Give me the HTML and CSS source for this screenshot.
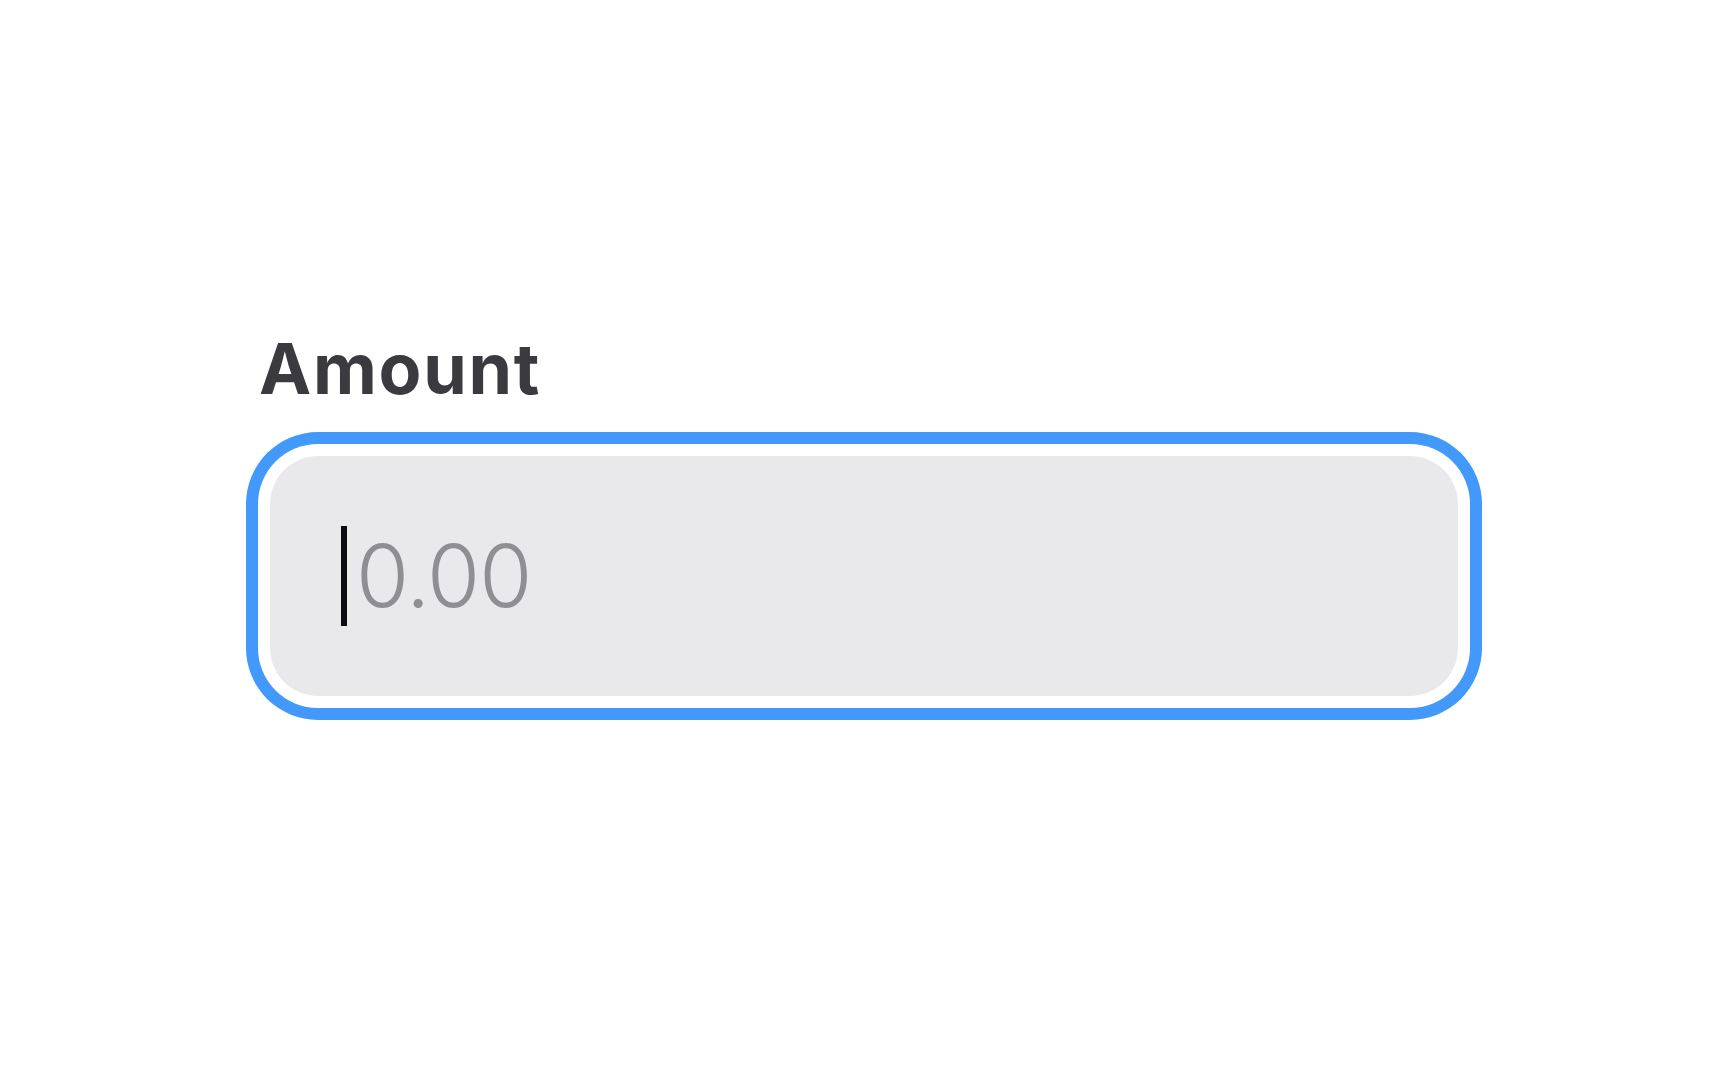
FILE: index.html
```html
<!DOCTYPE html>
<html lang="en">
<head>
<meta charset="utf-8">
<title>Amount</title>
<link rel="stylesheet" href="styles.css">
</head>
<body>
<main class="page">
  <div class="field">
    <label class="label">Amount</label>
    <div class="box">
      <span class="caret"></span>
      <span class="placeholder">0.00</span>
    </div>
  </div>
</main>
</body>
</html>
```

FILE: styles.css
```css
html, body {
  margin: 0;
  padding: 0;
  background: #ffffff;
}
.page {
  width: 1728px;
  height: 1080px;
  box-sizing: border-box;
  padding-top: 328px;
  display: flex;
  justify-content: center;
  align-items: flex-start;
}
.field {
  width: 1236px;
  display: flex;
  flex-direction: column;
}
.label {
  font-family: Inter, Roboto, "Liberation Sans", sans-serif;
  font-weight: 700;
  font-size: 70px;
  line-height: 82px;
  color: #3a3a3f;
  padding-left: 13px;
  margin-bottom: 22px;
  letter-spacing: 1.7px;
}
.box {
  margin: 24px;
  height: 240px;
  border-radius: 48px;
  background: #e9e9eb;
  box-shadow: 0 0 0 12px #ffffff, 0 0 0 24px #4299fa;
  display: flex;
  align-items: center;
  padding-left: 71px;
}
.caret {
  width: 6px;
  height: 100px;
  background: #0b0b14;
  margin-right: 9px;
}
.placeholder {
  font-family: Inter, Roboto, "Liberation Sans", sans-serif;
  font-weight: 360;
  font-size: 86px;
  line-height: 86px;
  color: #8e8e93;
  letter-spacing: -1px;
}
```
